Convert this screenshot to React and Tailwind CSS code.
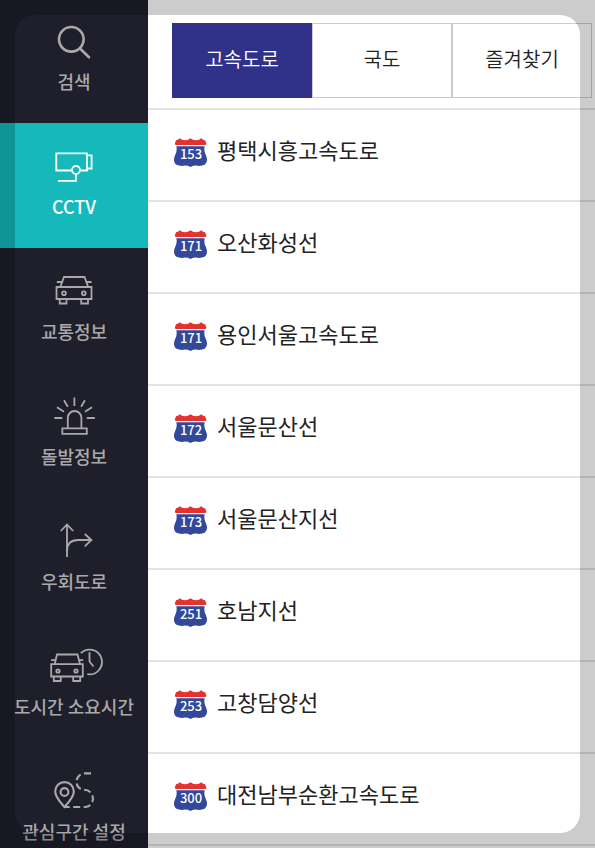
import clsx from 'clsx'

function SearchIcon() {
  return (
    <g strokeWidth="2.6">
      <circle cx="71.3" cy="41.3" r="12.3" />
      <path d="M80.3 50.8 89 59.3" strokeLinecap="round" />
    </g>
  )
}

function CctvIcon() {
  return (
    <g>
      <path d="M71.5 47.5H56.3V30.4H87V47.5H80.5M87 32.4h4.6V45.5H87" />
      <circle cx="76" cy="47" r="4" />
      <path d="M76 51v6.8H58" />
    </g>
  )
}

function CarIcon() {
  return (
    <g>
      <path d="M60.5 38.5 64 29H84.5L88 38.5M56.8 34H61.5M87 34h4.5" />
      <path d="M56.5 39h35v12h-35z" />
      <circle cx="64" cy="45.3" r="1.9" />
      <circle cx="83.8" cy="45.3" r="1.9" />
      <path d="M59.7 51v4.5h6.8V51M81.2 51v4.5H88V51" />
    </g>
  )
}

function SirenIcon() {
  return (
    <g>
      <path d="M67.8 55V44.8a6.8 6.8 0 0 1 13.6 0V55M62.3 55.3h24.5v5.5H62.3z" />
      <path d="M74.4 24.5v8.5M64 27.3l3.8 6.4M84.9 27.3l-3.8 6.4M57 34.3l7 4.5M92 34.3l-7 4.5M54.3 45h8M86.8 45h8" />
    </g>
  )
}

function DetourIcon() {
  return (
    <g>
      <path d="M67 59V26.5M60.8 33 67 26.5l6.2 6.5" />
      <path d="M67 53c0-7 4-11 11-11h13M84.8 36l6.6 6-6.6 6.3" />
    </g>
  )
}

function TravelTimeIcon() {
  return (
    <g>
      <path d="M54.7 41 57 31.5h20.5L80 41M51 37.2h4.5M78.8 37.2h4.4" />
      <path d="M51.2 41.2h31.6v12.3H51.2z" />
      <circle cx="58" cy="48" r="1.7" />
      <circle cx="76" cy="48" r="1.7" />
      <path d="M53.8 53.5V58h7v-4.5M73.2 53.5V58h7v-4.5" />
      <path d="M80.8 30.2A12.4 12.4 0 1 1 87.3 51.2M89.5 29.3v9.2l4 5" />
    </g>
  )
}

function RouteIcon() {
  return (
    <g strokeWidth="2.1">
      <path d="M64.5 59C60 54 55.2 49 55.2 43.4a9.3 9.3 0 0 1 18.6 0C73.8 49 69 54 64.5 59z" />
      <circle cx="64.5" cy="44" r="3.9" />
      <path d="M91 25.4H85.5C73.5 25.4 74 41.5 84 41.8 96 42 95.5 59 85 59H64.5" strokeDasharray="7 3.5" />
    </g>
  )
}

const MENU = [
  { label: '검색', icon: SearchIcon },
  { label: 'CCTV', icon: CctvIcon, active: true },
  { label: '교통정보', icon: CarIcon },
  { label: '돌발정보', icon: SirenIcon },
  { label: '우회도로', icon: DetourIcon },
  { label: '도시간 소요시간', icon: TravelTimeIcon },
  { label: '관심구간 설정', icon: RouteIcon },
]

const TABS = ['고속도로', '국도', '즐겨찾기']

const ROADS = [
  { no: 153, name: '평택시흥고속도로' },
  { no: 171, name: '오산화성선' },
  { no: 171, name: '용인서울고속도로' },
  { no: 172, name: '서울문산선' },
  { no: 173, name: '서울문산지선' },
  { no: 251, name: '호남지선' },
  { no: 253, name: '고창담양선' },
  { no: 300, name: '대전남부순환고속도로' },
]

function MenuItem({ label, icon: Icon, active }) {
  return (
    <button
      type="button"
      aria-current={active ? 'page' : undefined}
      className={clsx(
        'flex h-[125px] w-full shrink-0 flex-col items-center pt-[21px]',
        active ? 'bg-[#15b8bb] text-white' : 'text-[#a9a9aa]',
      )}
    >
      <svg
        viewBox="44 21 60 44"
        className="h-[44px] w-[60px] shrink-0"
        fill="none"
        stroke="currentColor"
        strokeWidth="1.8"
        aria-hidden="true"
      >
        <Icon />
      </svg>
      <span className="mt-0.5 text-lg/8 font-medium whitespace-nowrap">{label}</span>
    </button>
  )
}

// Interstate-style shield with the route number over it
function RoadShield({ no }) {
  return (
    <span className="relative h-[30px] w-[34px] shrink-0">
      <svg viewBox="0 0 34 30" className="h-full w-full" aria-hidden="true">
        <path
          d="M2 2.2Q4 2 5.7 .2 8 2.3 11 2.2 14.5 2 16.5 .2 18.5 2 22 2.2 25 2.3 27.3 .2 29 2 31 2.2L32.5 5.5 31.5 7H1.5L.8 5.5z"
          fill="#e5322f"
        />
        <path
          d="M2.3 8.2H30.7Q29.5 13 32 17.5 34.5 23 31 26.5 27 28.5 22 27.6 19 27.6 16.5 29 14 27.6 11 27.6 6 28.5 2 26.5-1.5 23 1 17.5 3.5 13 2.3 8.2z"
          fill="#31489b"
        />
      </svg>
      <span className="absolute inset-x-0 top-1.5 text-center text-[13px]/5 font-medium text-white">{no}</span>
    </span>
  )
}

export default function App() {
  return (
    <div className="flex h-screen overflow-hidden bg-white font-['Noto_Sans_CJK_KR','Noto_Sans',sans-serif]">
      <nav className="-mt-0.5 flex w-[148px] shrink-0 flex-col bg-[#1f1e2b]">
        {MENU.map((item) => (
          <MenuItem key={item.label} {...item} />
        ))}
      </nav>

      <main className="min-w-0 flex-1">
        <div role="tablist" className="flex border-b-2 border-[#e2e2e2] pt-[23px] pr-[3px] pb-[10px] pl-6">
          {TABS.map((tab, i) => (
            <button
              key={tab}
              type="button"
              role="tab"
              aria-selected={i === 0}
              className={clsx(
                'h-[75px] flex-1 border pb-1 text-xl font-[350]',
                i === 0 ? 'border-[#303189] bg-[#303189] text-white' : 'border-[#cccccc] text-[#222222]',
              )}
            >
              {tab}
            </button>
          ))}
        </div>

        <ul>
          {ROADS.map((road) => (
            <li key={road.name} className="border-b-2 border-[#e2e2e2]">
              <button type="button" className="flex h-[90px] w-full items-center gap-[9px] pb-1 pl-[26px] text-left">
                <RoadShield no={road.no} />
                <span className="pb-2 text-[22px]/8 text-[#222222]">{road.name}</span>
              </button>
            </li>
          ))}
        </ul>
      </main>

      {/* dimmed frame around the focused area */}
      <div className="pointer-events-none fixed inset-[15px] rounded-[20px] shadow-[0_0_0_40px_rgba(0,0,0,0.2)]" />
    </div>
  )
}
